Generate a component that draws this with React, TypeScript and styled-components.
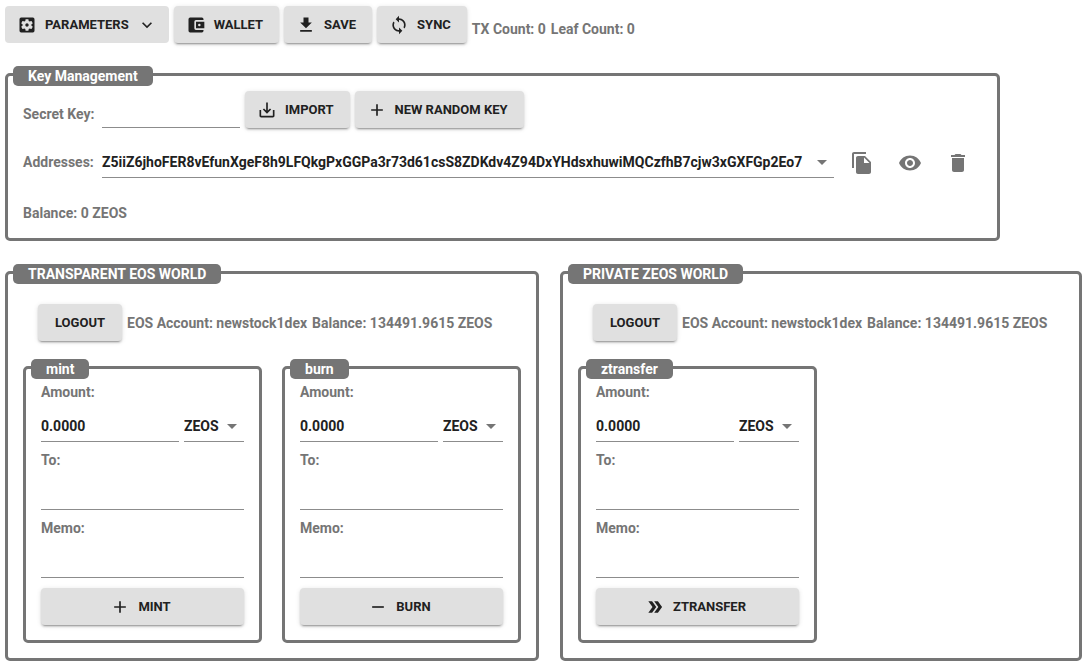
import React from "react";
import styled, { createGlobalStyle, css } from "styled-components";
import {
  MdAdd,
  MdArrowDropDown,
  MdDelete,
  MdDoubleArrow,
  MdFileCopy,
  MdFileDownload,
  MdKeyboardArrowDown,
  MdRemove,
  MdSaveAlt,
  MdSettingsApplications,
  MdSync,
  MdVisibility,
} from "react-icons/md";

const grey = "#757575";
const ink = "#212121";

const GlobalStyle = createGlobalStyle`
  *, *::before, *::after { box-sizing: border-box; }
  body {
    margin: 0;
    background: #fff;
    color: ${grey};
    font: bold 14px/20px Roboto, "Liberation Sans", sans-serif;
  }
`;

const Page = styled.main`
  display: flex;
  flex-direction: column;
  align-items: flex-start;
  gap: 30px;
  padding: 6px 4px 6px 5px;
`;

const Row = styled.div<{ $inset?: boolean }>`
  display: flex;
  align-items: center;
  gap: 5px;
  padding-left: ${(p) => (p.$inset ? 15 : 0)}px;
`;

const Text = styled.span<{ $low?: boolean }>`
  white-space: nowrap;
  padding-top: ${(p) => (p.$low ? 8 : 0)}px;
`;

const Label = styled.label<{ $low?: boolean }>`
  min-width: 74px;
  white-space: nowrap;
  padding-top: ${(p) => (p.$low ? 8 : 0)}px;
`;

const Button = styled.button<{ $flat?: boolean }>`
  display: inline-flex;
  align-items: center;
  justify-content: center;
  gap: 8px;
  min-width: 84px;
  padding: 6px 16px;
  border: 0;
  border-radius: 4px;
  background: #e0e0e0;
  color: ${ink};
  font: inherit;
  font-size: 13px;
  line-height: 25px;
  text-transform: uppercase;
  white-space: nowrap;
  cursor: pointer;
  ${(p) =>
    !p.$flat &&
    css`
      box-shadow: 0 3px 1px -2px rgba(0, 0, 0, 0.2), 0 2px 2px 0 rgba(0, 0, 0, 0.14),
        0 1px 5px 0 rgba(0, 0, 0, 0.12);
    `}
  svg {
    width: 20px;
    height: 20px;
  }
  svg:first-child {
    margin-left: -4px;
  }
  svg:last-child {
    margin-right: -4px;
  }
`;

const IconButton = styled.button`
  display: inline-flex;
  padding: 8px;
  border: 0;
  border-radius: 50%;
  background: none;
  color: ${grey};
  cursor: pointer;
  svg {
    width: 24px;
    height: 24px;
  }
`;

const Panel = styled.fieldset<{ $grow?: boolean }>`
  min-width: 0;
  margin: 0;
  padding: 0 15px 15px;
  border: 3px solid ${grey};
  border-radius: 5px;
  flex: ${(p) => (p.$grow ? "1 0 auto" : "0 0 auto")};
`;

const Legend = styled.legend`
  float: left;
  margin: -10px 0 0 -10px;
  padding: 0 15px;
  border-radius: 5px;
  background: ${grey};
  color: #fff;
`;

const Stack = styled.div<{ $gap: number; $top: number }>`
  clear: both;
  display: flex;
  flex-direction: column;
  gap: ${(p) => p.$gap}px;
  padding-top: ${(p) => p.$top}px;
`;

const underline = css`
  height: 32px;
  margin: 0;
  border: 0;
  border-bottom: 1px solid #8c8c8c;
  border-radius: 0;
  background: transparent;
  color: ${ink};
  font: inherit;
  outline: none;
`;

const Input = styled.input<{ $full?: boolean }>`
  ${underline}
  align-self: flex-end;
  width: ${(p) => (p.$full ? "100%" : "138px")};
  padding: 0;
`;

const SelectBox = styled.div<{ $min: number }>`
  position: relative;
  display: grid;
  min-width: ${(p) => p.$min}px;
  svg {
    position: absolute;
    right: 0;
    top: 4px;
    width: 24px;
    height: 24px;
    pointer-events: none;
  }
`;

const Select = styled.select`
  ${underline}
  appearance: none;
  padding: 0 24px 0 0;
`;

const AddressRow = styled.div`
  display: flex;
  align-items: center;
  gap: 8px;
  padding-right: 4px;
`;

const AddressField = styled.div`
  display: flex;
  align-items: center;
  gap: 5px;
  padding-bottom: 2px;
`;

const Balance = styled.div`
  padding-top: 5px;
`;

const Worlds = styled.div`
  display: flex;
  align-items: stretch;
  align-self: stretch;
  gap: 21px;
`;

const Cards = styled.div`
  display: flex;
  gap: 20px;
`;

const SubmitRow = styled.div`
  display: flex;
  flex-direction: column;
  padding-top: 2px;
`;

function WalletIcon() {
  return (
    <svg viewBox="0 0 24 24" fill="currentColor" aria-hidden="true">
      <path d="M5 3h14a2 2 0 0 1 2 2v1h-9a2 2 0 0 0-2 2v8a2 2 0 0 0 2 2h9v1a2 2 0 0 1-2 2H5a2 2 0 0 1-2-2V5a2 2 0 0 1 2-2z" />
      <path d="M12 8h10v8H12zm4 2.500a1.500 1.500 0 1 0 0 3 1.500 1.500 0 0 0 0-3z" fillRule="evenodd" />
    </svg>
  );
}

type DropdownProps = { id: string; label?: string; minWidth: number; options: string[] };

function Dropdown({ id, label, minWidth, options }: DropdownProps) {
  return (
    <SelectBox $min={minWidth}>
      <Select id={id} aria-label={label}>
        {options.map((o) => (
          <option key={o}>{o}</option>
        ))}
      </Select>
      <MdArrowDropDown />
    </SelectBox>
  );
}

function ActionCard({ name, icon }: { name: string; icon: React.ReactNode }) {
  return (
    <Panel>
      <Legend>{name}</Legend>
      <Stack $gap={8} $top={3}>
        <Label htmlFor={`${name}-amount`}>Amount:</Label>
        <Row>
          <Input id={`${name}-amount`} defaultValue="0.0000" />
          <Dropdown id={`${name}-token`} label="Token" minWidth={60} options={["ZEOS"]} />
        </Row>
        <Label htmlFor={`${name}-to`}>To:</Label>
        <Input id={`${name}-to`} $full />
        <Label htmlFor={`${name}-memo`}>Memo:</Label>
        <Input id={`${name}-memo`} $full />
        <SubmitRow>
          <Button type="button">
            {icon}
            <span>{name}</span>
          </Button>
        </SubmitRow>
      </Stack>
    </Panel>
  );
}

function World({ title, grow, children }: { title: string; grow?: boolean; children: React.ReactNode }) {
  return (
    <Panel $grow={grow}>
      <Legend>{title}</Legend>
      <Stack $gap={25} $top={20}>
        <Row $inset>
          <Button type="button">
            <span>Logout</span>
          </Button>
          <Text>EOS Account: newstock1dex</Text>
          <Text>Balance: 134491.9615 ZEOS</Text>
        </Row>
        <Cards>{children}</Cards>
      </Stack>
    </Panel>
  );
}

export default function App() {
  return (
    <>
      <GlobalStyle />
      <Page>
        <Row>
          <Button type="button" $flat>
            <MdSettingsApplications />
            <span>Parameters</span>
            <MdKeyboardArrowDown />
          </Button>
          <Button type="button">
            <WalletIcon />
            <span>Wallet</span>
          </Button>
          <Button type="button">
            <MdFileDownload />
            <span>Save</span>
          </Button>
          <Button type="button">
            <MdSync />
            <span>Sync</span>
          </Button>
          <Text $low>TX Count: 0</Text>
          <Text $low>Leaf Count: 0</Text>
        </Row>

        <Panel>
          <Legend>Key Management</Legend>
          <Stack $gap={15} $top={5}>
            <Row>
              <Label htmlFor="secret" $low>
                Secret Key:
              </Label>
              <Input id="secret" />
              <Button type="button">
                <MdSaveAlt />
                <span>Import</span>
              </Button>
              <Button type="button">
                <MdAdd />
                <span>New Random Key</span>
              </Button>
            </Row>
            <AddressRow>
              <AddressField>
                <Label htmlFor="addresses">Addresses:</Label>
                <Dropdown
                  id="addresses"
                  minWidth={732}
                  options={["Z5iiZ6jhoFER8vEfunXgeF8h9LFQkgPxGGPa3r73d61csS8ZDKdv4Z94DxYHdsxhuwiMQCzfhB7cjw3xGXFGp2Eo7"]}
                />
              </AddressField>
              <IconButton type="button" aria-label="Copy address">
                <MdFileCopy />
              </IconButton>
              <IconButton type="button" aria-label="Show key">
                <MdVisibility />
              </IconButton>
              <IconButton type="button" aria-label="Delete address">
                <MdDelete />
              </IconButton>
            </AddressRow>
            <Balance>Balance: 0 ZEOS</Balance>
          </Stack>
        </Panel>

        <Worlds>
          <World title="TRANSPARENT EOS WORLD">
            <ActionCard name="mint" icon={<MdAdd />} />
            <ActionCard name="burn" icon={<MdRemove />} />
          </World>
          <World title="PRIVATE ZEOS WORLD" grow>
            <ActionCard name="ztransfer" icon={<MdDoubleArrow />} />
          </World>
        </Worlds>
      </Page>
    </>
  );
}
